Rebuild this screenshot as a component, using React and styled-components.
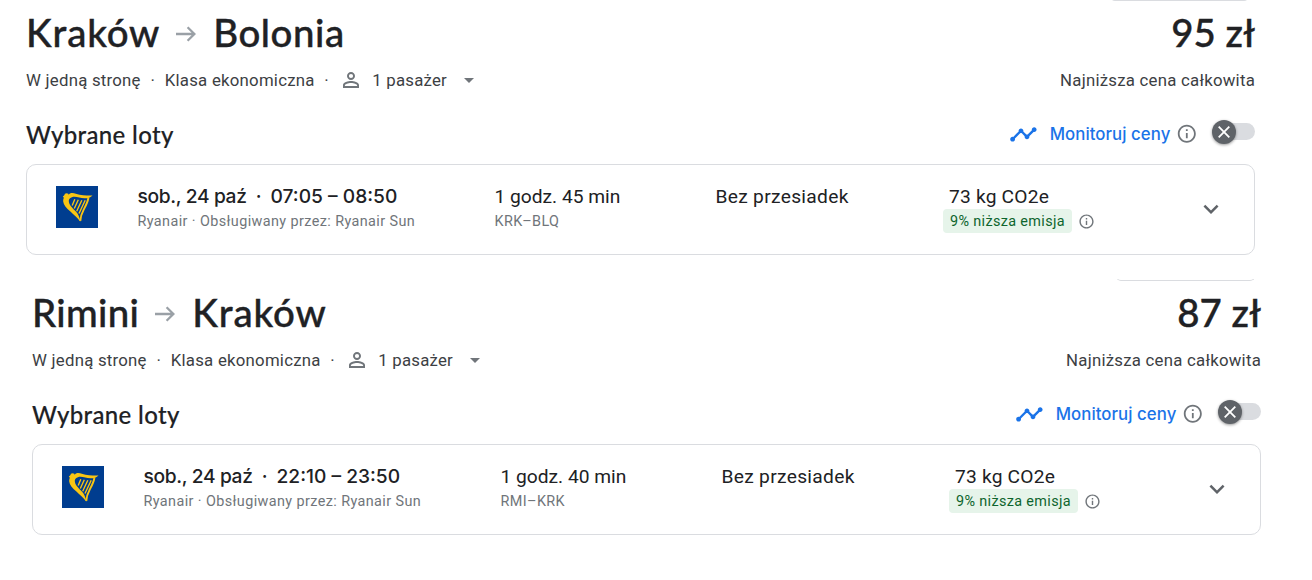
import React from "react";
import styled, { createGlobalStyle } from "styled-components";
import {
    MdArrowDropDown,
    MdExpandMore,
    MdInfoOutline,
    MdPersonOutline,
    MdTimeline,
} from "react-icons/md";

const trips = [
    {
        id: "krk-blq",
        from: "Kraków",
        to: "Bolonia",
        price: "95 zł",
        date: "sob., 24 paź",
        hours: "07:05 – 08:50",
        duration: "1 godz. 45 min",
        airports: "KRK–BLQ",
        offset: 26,
    },
    {
        id: "rmi-krk",
        from: "Rimini",
        to: "Kraków",
        price: "87 zł",
        date: "sob., 24 paź",
        hours: "22:10 – 23:50",
        duration: "1 godz. 40 min",
        airports: "RMI–KRK",
        offset: 32,
    },
];

const cityTracking = { Kraków: 0.85, Bolonia: 0.55, Rimini: 0.35 };

const ArrowIcon = () => (
    <svg width="20" height="16" viewBox="0 0 20 16" fill="none" stroke="#9aa0a6" strokeWidth="2.3">
        <path d="M0 8h18.2M11.6 1.2L18.4 8l-6.8 6.8" />
    </svg>
);

const CloseIcon = () => (
    <svg width="12" height="12" viewBox="0 0 12 12" stroke="#fff" strokeWidth="1.8">
        <path d="M.7.7l10.6 10.6M11.3.7L.7 11.3" />
    </svg>
);

const HarpLogo = () => (
    <svg width="42" height="42" viewBox="0 0 42 42">
        <rect width="42" height="42" fill="#003d8f" />
        <g fill="#f9c513">
            <circle cx="10.6" cy="9.6" r="2.3" />
            <path d="M6.8 10.2l3-1.400c1.800 1 2.800 0 4.200-1.200 3-1.400 6 .4 9.500 1.200 4.500 1 8.500.6 13 .6-2.200 2.200-4.600 3.100-8 2.900-5-.2-8.500-2.300-12.600-1.100-2.400.8-3.500 2.500-3 4.800.8 4 4.200 6.400 7.200 9.800 2 2.300 3.400 5 4.300 9.900-3.200-4-6.500-6.800-10-10.100C10.200 22 7.600 19 7.200 15.500c-.2-1.900.6-3.100.6-3.700z" />
        </g>
        <g fill="none" stroke="#f9c513">
            <path d="M32.400 12c-.7 4.200-2.400 7.300-4.600 11.400-2 3.800-3.300 7-3.500 11.500" strokeWidth="1.900" />
            <path d="M18.800 13.300l-2.600 6.200M22.300 13.800l-4 8.700M25.800 14.200l-5.100 11M29.200 14.300l-6.200 13.200" strokeWidth="1.350" />
        </g>
    </svg>
);

const Trip = ({ trip }) => (
    <Section $offset={trip.offset}>
        <CutButton $height={trip.offset === 26 ? 1 : 2} />
        <TitleRow>
            <Route>
                <City $spacing={cityTracking[trip.from]}>{trip.from}</City>
                <ArrowIcon />
                <City $spacing={cityTracking[trip.to]}>{trip.to}</City>
            </Route>
            <Price>{trip.price}</Price>
        </TitleRow>
        <MetaRow>
            <Meta>
                W jedną stronę
                <Dot>·</Dot>
                Klasa ekonomiczna
                <Dot>·</Dot>
                <Passengers>
                    <MdPersonOutline size={24} color="#70757a" />
                    1 pasażer
                    <MdArrowDropDown size={24} color="#70757a" />
                </Passengers>
            </Meta>
            <span>Najniższa cena całkowita</span>
        </MetaRow>
        <HeadingRow>
            <Heading>Wybrane loty</Heading>
            <Tracking>
                <MdTimeline size={28.8} color="#1a73e8" />
                <TrackingLabel>Monitoruj ceny</TrackingLabel>
                <MdInfoOutline size={21.6} color="#70757a" />
                <Toggle>
                    <Thumb>
                        <CloseIcon />
                    </Thumb>
                </Toggle>
            </Tracking>
        </HeadingRow>
        <Card>
            <HarpLogo />
            <div>
                <Times>
                    <DateText>{trip.date}</DateText>
                    <Dot>·</Dot>
                    {trip.hours}
                </Times>
                <Small $spacing={0.4}>Ryanair · Obsługiwany przez: Ryanair Sun</Small>
            </div>
            <div>
                <Value $spacing={0}>{trip.duration}</Value>
                <Small $spacing={0.4}>{trip.airports}</Small>
            </div>
            <Value $spacing={0.3}>Bez przesiadek</Value>
            <div>
                <Co2 $spacing={0.2}>73 kg CO2e</Co2>
                <Emission>
                    <Badge>9% niższa emisja</Badge>
                    <MdInfoOutline size={17} color="#70757a" />
                </Emission>
            </div>
            <MdExpandMore size={30} color="#5f6368" />
        </Card>
    </Section>
);

const App = () => (
    <>
        <GlobalStyle />
        {trips.map((trip) => (
            <Trip key={trip.id} trip={trip} />
        ))}
    </>
);

export default App;

const GlobalStyle = createGlobalStyle`
    * {
        box-sizing: border-box;
    }
    body {
        margin: 0;
        background: #fff;
        color: #202124;
        font-family: Roboto, "Liberation Sans", sans-serif;
        white-space: nowrap;
        overflow: hidden;
    }
    svg {
        display: block;
        flex: none;
    }
`;

const Section = styled.section`
    position: relative;
    width: 1229px;
    height: 280px;
    margin-left: ${(props) => props.$offset}px;
`;

/* bottom edge of the button above the price */
const CutButton = styled.div`
    position: absolute;
    right: 6px;
    top: -6px;
    width: 139px;
    height: 7px;
    border: 1px solid #dadce0;
    border-top: none;
    border-radius: 0 0 5px 5px;
    clip-path: inset(${(props) => 7 - props.$height}px 0 0 0);
`;

const Row = styled.div`
    display: flex;
    align-items: center;
    justify-content: space-between;
`;

const TitleRow = styled(Row)`
    height: 68px;
    padding-bottom: 4px;
    font-family: Lato, sans-serif;
    font-size: 38.4px;
    font-weight: 500;
    -webkit-text-stroke: 0.4px #202124;
`;

const Route = styled.h1`
    display: flex;
    align-items: center;
    margin: 0;
    font: inherit;

    svg {
        margin: 4px 17px 0 16px;
    }
`;

const City = styled.span`
    letter-spacing: ${(props) => props.$spacing}px;
`;

const Price = styled.div`
    letter-spacing: 0;
`;

const MetaRow = styled(Row)`
    height: 24px;
    font-size: 16.8px;
    letter-spacing: 0.24px;
    color: #3c4043;
`;

const Meta = styled.div`
    display: flex;
    align-items: center;
`;

const Dot = styled.span`
    width: 24px;
    text-align: center;
`;

const Passengers = styled.div`
    display: flex;
    align-items: center;
    gap: 9.5px;
`;

const HeadingRow = styled(Row)`
    height: 36px;
    margin-top: 24px;
`;

const Heading = styled.h2`
    margin: 0;
    font-family: Lato, sans-serif;
    font-size: 24px;
    font-weight: 500;
    letter-spacing: 0.35px;
    -webkit-text-stroke: 0.15px #202124;
`;

const Tracking = styled.div`
    display: flex;
    align-items: center;
`;

const TrackingLabel = styled.span`
    margin: 0 6px 0 12px;
    font-family: Inter, sans-serif;
    font-size: 16.8px;
    font-weight: 500;
    letter-spacing: 0.07px;
    color: #1a73e8;
`;

const Toggle = styled.div`
    display: flex;
    align-items: center;
    width: 43px;
    height: 24px;
    margin: -4px 0 0 14px;

    &::after {
        content: "";
        flex: 1;
        height: 17px;
        margin-left: -12px;
        border-radius: 0 9px 9px 0;
        background: #dadce0;
    }
`;

const Thumb = styled.div`
    position: relative;
    z-index: 1;
    display: flex;
    align-items: center;
    justify-content: center;
    width: 24px;
    height: 24px;
    border-radius: 50%;
    background: #5f6368;
    box-shadow: 0 1px 3px rgba(0, 0, 0, 0.4);
`;

const Card = styled.div`
    display: grid;
    grid-template-columns: 81.5px 357px 221px 227.5px 1fr 30px;
    align-items: start;
    height: 91px;
    margin-top: 12px;
    padding: 17px 28px 0 29px;
    border: 1px solid #dadce0;
    border-radius: 10px;

    > svg {
        margin-top: 4px;
    }

    > svg:last-child {
        margin-top: 12px;
    }
`;

const Value = styled.div`
    height: 28px;
    line-height: 29px;
    font-size: 19.2px;
    letter-spacing: ${(props) => props.$spacing}px;
`;

const Co2 = styled(Value)`
    height: 27px;
    padding-left: 6px;
`;

const Times = styled.div`
    display: flex;
    height: 28px;
    line-height: 28px;
    font-family: Inter, sans-serif;
    font-size: 19.2px;
    font-weight: 500;
`;

const DateText = styled.span`
    letter-spacing: -0.35px;
`;

const Small = styled.div`
    line-height: 24px;
    font-size: 14.4px;
    letter-spacing: ${(props) => props.$spacing}px;
    color: #70757a;
`;

const Emission = styled.div`
    display: flex;
    align-items: center;
    gap: 6px;
`;

const Badge = styled.span`
    width: 129px;
    height: 24px;
    padding-left: 7px;
    border-radius: 4px;
    background: #e6f4ea;
    color: #0d652d;
    font-size: 14.4px;
    line-height: 25px;
    letter-spacing: 0.36px;
`;
